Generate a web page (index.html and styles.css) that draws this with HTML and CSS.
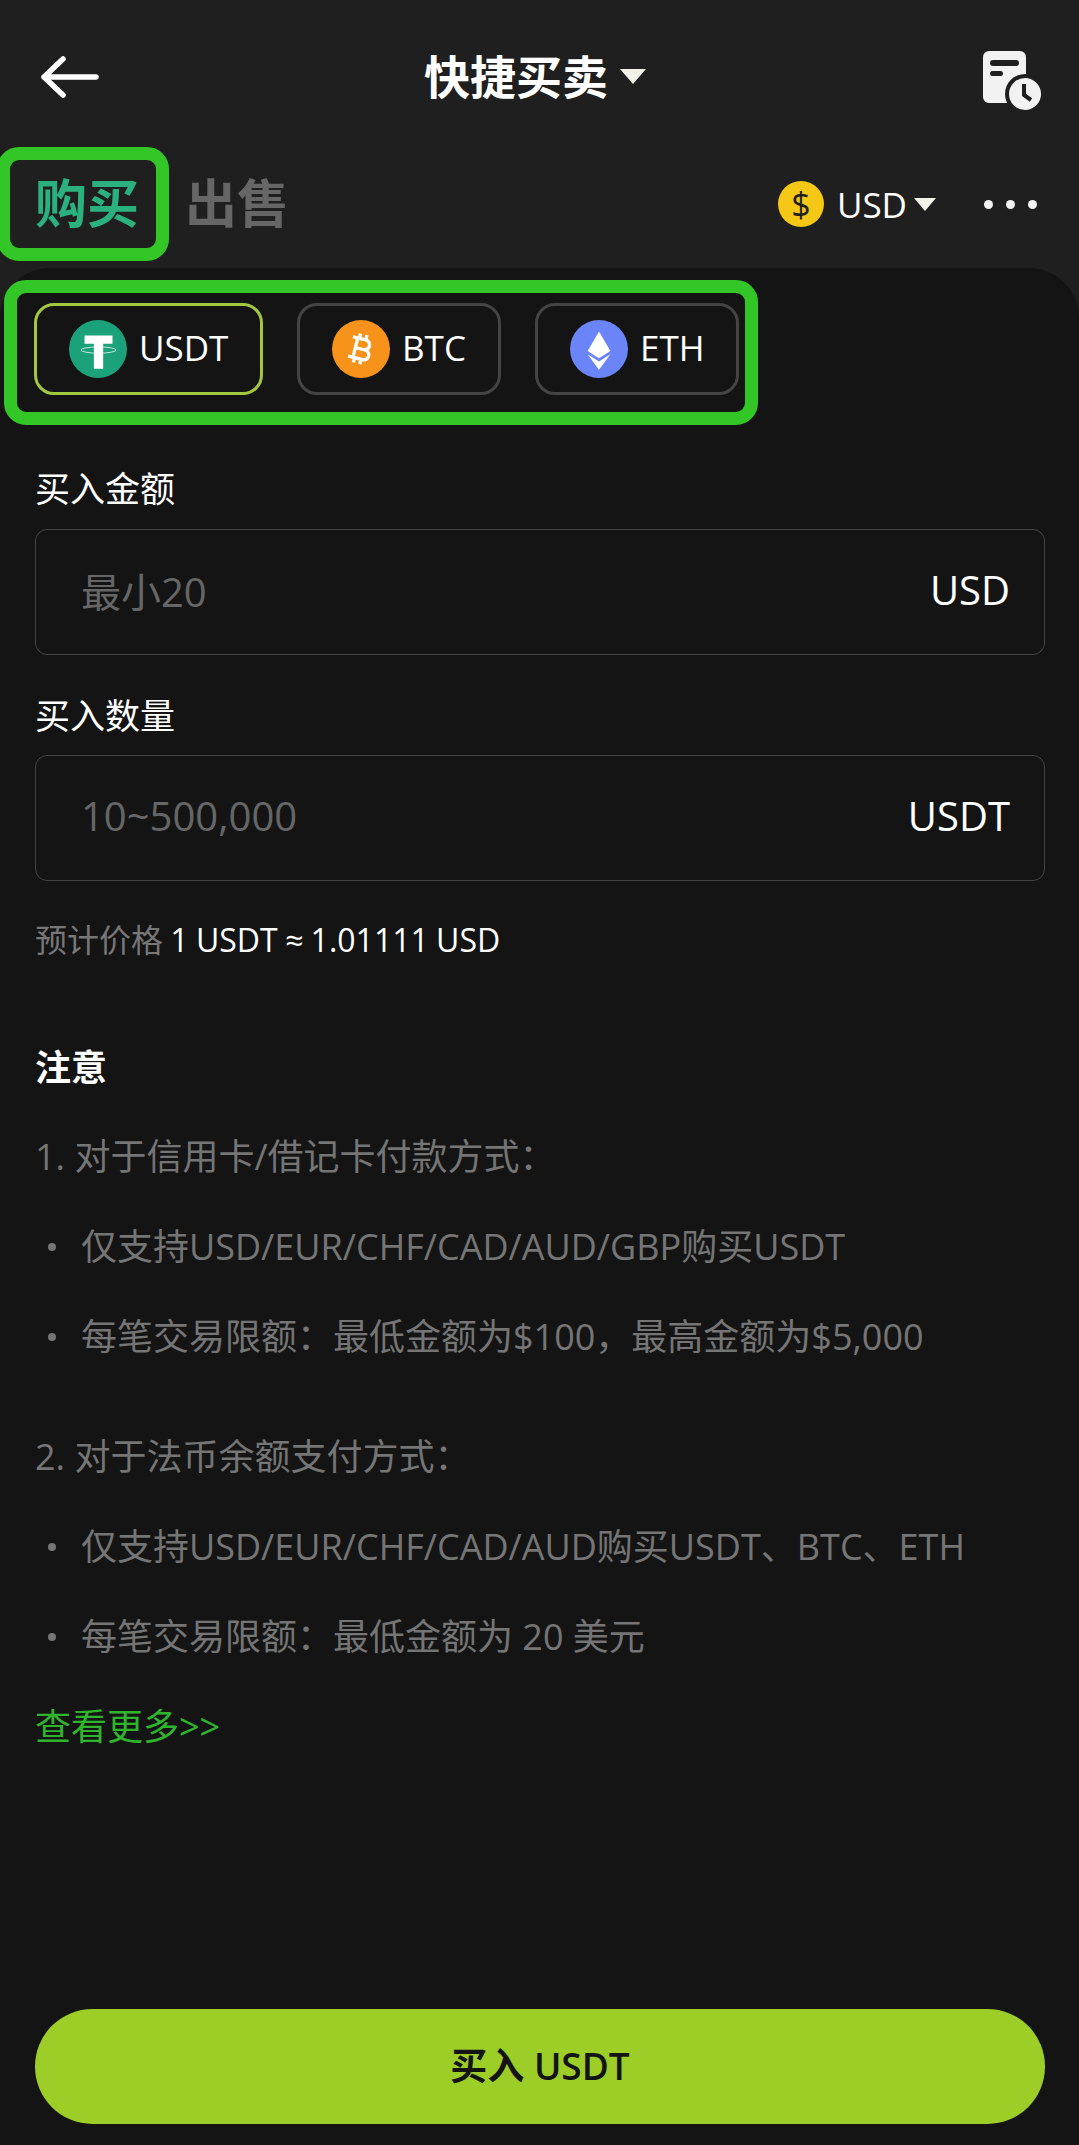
FILE: index.html
```html
<!DOCTYPE html>
<html>
    <head>
        <title>快捷买卖</title>
        <link rel="stylesheet" href="styles.css">
    </head>
    <body>
        <div id="top">
            <div class="nav">
                <svg class="back" width="60" height="44" viewBox="0 0 60 44">
                    <path d="M24 4 L5 22 L24 40 M5 22 H57" fill="none" stroke="#fff" stroke-width="5.5" stroke-linecap="round" stroke-linejoin="round"/>
                </svg>
                <div class="title"><span class="title-text">快捷买卖</span><span class="caret big"></span></div>
                <svg class="history" width="62" height="62" viewBox="0 0 62 62">
                    <rect x="3" y="2" width="43" height="52" rx="6" fill="#f2f2f2"/>
                    <rect x="10" y="11" width="29" height="6" rx="3" fill="#1f1f1f"/>
                    <rect x="10" y="22" width="13" height="5" rx="2.5" fill="#1f1f1f"/>
                    <circle cx="45" cy="45" r="20" fill="#1f1f1f"/>
                    <circle cx="45" cy="45" r="16" fill="#f2f2f2"/>
                    <path d="M44 35 V46 L51 51" fill="none" stroke="#1f1f1f" stroke-width="4"/>
                </svg>
            </div>
            <div class="tabs">
                <span class="tab active">购买</span>
                <span class="tab">出售</span>
                <div class="currency">
                    <span class="coin">$</span>
                    <span class="code">USD</span>
                    <span class="caret"></span>
                </div>
                <div class="dots"><i></i><i></i><i></i></div>
            </div>
        </div>

        <div id="panel">
            <div class="chips">
                <div class="chip selected">
                    <svg class="token" viewBox="0 0 56 56">
                        <circle cx="28" cy="28" r="28" fill="#1ba27a"/>
                        <path d="M15 15 H42 V23 H33 V47 H24 V23 H15 Z" fill="#fff"/>
                        <ellipse cx="28.5" cy="29" rx="17" ry="3" fill="none" stroke="#fff" stroke-width="0.7"/>
                    </svg>
                    <span class="sym">USDT</span>
                </div>
                <div class="chip">
                    <svg class="token" viewBox="0 0 56 56">
                        <circle cx="28" cy="28" r="28" fill="#f7931a"/>
                        <g transform="translate(28 28) rotate(14) scale(1.6) translate(-12.5 -12)">
                            <path d="M17.06 11.57c.59-.69.94-1.59.94-2.57 0-1.86-1.27-3.43-3-3.87V3h-2v2h-2V3H9v2H6v2h2v10H6v2h3v2h2v-2h2v2h2v-2c2.21 0 4-1.79 4-4 0-1.45-.78-2.73-1.94-3.43zM10 7h4c1.1 0 2 .9 2 2s-.9 2-2 2h-4V7zm5 10h-5v-4h5c1.1 0 2 .9 2 2s-.9 2-2 2z" fill="#fff"/>
                        </g>
                    </svg>
                    <span class="sym">BTC</span>
                </div>
                <div class="chip">
                    <svg class="token" viewBox="0 0 56 56">
                        <circle cx="28" cy="28" r="28" fill="#6b84f8"/>
                        <path d="M28 11 L39 30 L28 37 L17 30 Z" fill="#fff"/>
                        <path d="M17 33 L28 40 L39 33 L28 48 Z" fill="#fff"/>
                    </svg>
                    <span class="sym">ETH</span>
                </div>
            </div>

            <div class="label first">买入金额</div>
            <div class="field">
                <span class="hint">最小20</span>
                <span class="unit">USD</span>
            </div>

            <div class="label">买入数量</div>
            <div class="field">
                <span class="hint">10~500,000</span>
                <span class="unit">USDT</span>
            </div>

            <div class="price"><span class="muted">预计价格</span> 1 USDT ≈ 1.01111 USD</div>

            <div class="notice">注意</div>
            <div class="notes">
                <div class="row">1. 对于信用卡/借记卡付款方式&#xFF1A;</div>
                <div class="row item">仅支持USD/EUR/CHF/CAD/AUD/GBP购买USDT</div>
                <div class="row item">每笔交易限额&#xFF1A;最低金额为$100&#xFF0C;最高金额为$5,000</div>
                <div class="row gap">2. 对于法币余额支付方式&#xFF1A;</div>
                <div class="row item">仅支持USD/EUR/CHF/CAD/AUD购买USDT、BTC、ETH</div>
                <div class="row item">每笔交易限额&#xFF1A;最低金额为 20 美元</div>
                <a class="row more">查看更多&gt;&gt;</a>
            </div>

            <div class="buy">买入 USDT</div>
        </div>

        <!-- green annotation frames drawn on top of the screenshot -->
        <div class="frame frame-tab"></div>
        <div class="frame frame-chips"></div>
    </body>
</html>
```

FILE: styles.css
```css
html, body {
    margin: 0;
    height: 2145px;
    overflow: hidden;
}

body {
    position: relative;
    display: flex;
    flex-direction: column;
    background-color: #1f1f1f;
    color: white;
    font-family: "Open Sans", "Noto Sans CJK SC", sans-serif;
}

#top {
    height: 268px;
    flex-shrink: 0;
}

.nav {
    height: 152px;
    padding: 0 37px 0 39px;
    display: flex;
    align-items: center;
    justify-content: space-between;
}

.back {
    margin-top: 2px;
}

.title {
    display: flex;
    align-items: center;
    margin-left: -9px;
    font-size: 46px;
    font-weight: 700;
}

.title-text {
    margin-bottom: 5px;
}

.caret {
    display: inline-block;
    margin-left: 7px;
    border-left: 11px solid transparent;
    border-right: 11px solid transparent;
    border-top: 13px solid #f2f2ea;
}

.caret.big {
    margin-left: 12px;
    border-left-width: 13px;
    border-right-width: 13px;
    border-top-width: 15px;
}

.history {
    margin-top: 8px;
}

.tabs {
    height: 104px;
    padding: 0 42px 0 35px;
    box-sizing: border-box;
    display: flex;
    align-items: center;
}

.tab {
    margin-right: 46px;
    margin-bottom: 8px;
    font-size: 52px;
    font-weight: 700;
    color: #666;
}

.tab.active {
    color: #2bb17f;
}

.currency {
    display: flex;
    align-items: center;
    margin-left: auto;
    font-size: 35px;
}

.coin {
    width: 46px;
    height: 46px;
    margin-right: 13px;
    border-radius: 50%;
    background: #f4c815;
    color: #1f1f1f;
    font-size: 34px;
    line-height: 46px;
    text-align: center;
}

.dots {
    display: flex;
    gap: 13px;
    margin-left: 48px;
}

.dots i {
    width: 9px;
    height: 9px;
    border-radius: 50%;
    background: #f2f2f2;
}

#panel {
    flex: 1;
    display: flex;
    flex-direction: column;
    padding: 35px 34px 21px 35px;
    background: #141414;
    border-radius: 50px 50px 0 0;
}

.chips {
    display: flex;
    gap: 34px;
    margin-left: -1px;
}

.chip {
    box-sizing: border-box;
    width: 204px;
    height: 92px;
    padding-left: 32px;
    display: flex;
    align-items: center;
    gap: 12px;
    border: 3px solid #444;
    border-radius: 20px;
    font-size: 35px;
}

.chip.selected {
    width: 229px;
    border-color: #a3c83f;
}

.sym {
    margin-bottom: 3px;
}

.token {
    width: 58px;
    height: 58px;
}

.label {
    height: 48px;
    line-height: 48px;
    margin-top: 37px;
    font-size: 35px;
}

.label.first {
    margin-top: 70px;
}

.field {
    box-sizing: border-box;
    height: 126px;
    margin-top: 16px;
    padding: 0 34px 5px 45px;
    display: flex;
    align-items: center;
    justify-content: space-between;
    border: 1px solid #444;
    border-radius: 12px;
    font-size: 40px;
}

.label + .field + .label + .field {
    margin-top: 15px;
}

.hint {
    color: #666;
}

.price {
    height: 48px;
    line-height: 48px;
    margin-top: 35px;
    font-size: 32px;
    word-spacing: -1px;
}

.muted {
    color: #777;
}

.notice {
    height: 48px;
    line-height: 48px;
    margin-top: 80px;
    font-size: 36px;
    font-weight: 700;
}

.notes {
    margin-top: 20px;
    font-size: 36px;
    color: #757575;
}

.row {
    display: block;
    height: 90px;
    line-height: 90px;
    white-space: nowrap;
}

.row.gap {
    margin-top: 30px;
}

.item {
    position: relative;
    padding-left: 46px;
}

.item::before {
    content: "";
    position: absolute;
    left: 13px;
    top: 41px;
    width: 8px;
    height: 8px;
    border-radius: 50%;
    background: #757575;
}

.more {
    color: #2fb52b;
}

.buy {
    height: 115px;
    margin-top: auto;
    border-radius: 58px;
    background: #9dce27;
    color: #141414;
    font-size: 37px;
    font-weight: 600;
    line-height: 113px;
    text-align: center;
}

.frame {
    position: absolute;
    box-sizing: border-box;
    border: 13px solid #32c626;
    border-radius: 22px;
}

.frame-tab {
    left: -3px;
    top: 147px;
    width: 172px;
    height: 114px;
}

.frame-chips {
    left: 4px;
    top: 280px;
    width: 754px;
    height: 145px;
}
```
